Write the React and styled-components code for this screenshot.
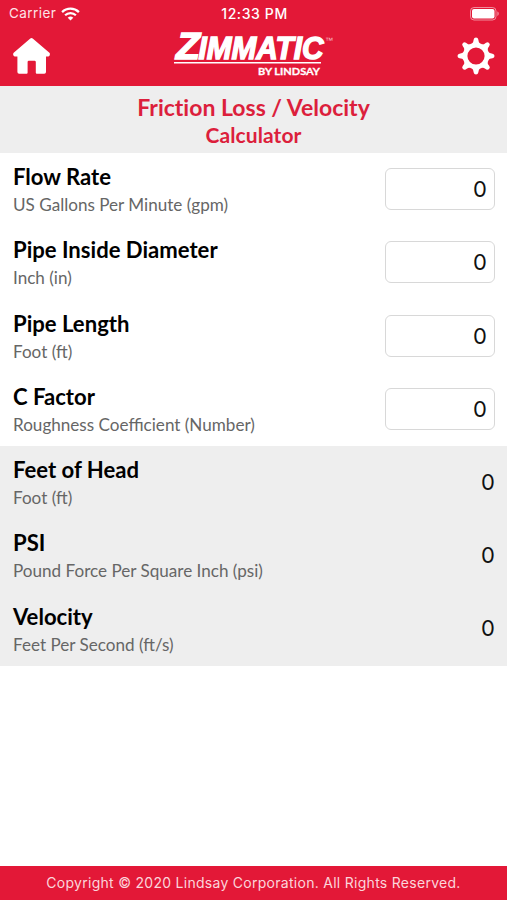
import React from "react";
import styled, { createGlobalStyle } from "styled-components";

const inputs = [
  { label: "Flow Rate", unit: "US Gallons Per Minute (gpm)" },
  { label: "Pipe Inside Diameter", unit: "Inch (in)" },
  { label: "Pipe Length", unit: "Foot (ft)" },
  { label: "C Factor", unit: "Roughness Coefficient (Number)" },
];

const results = [
  { label: "Feet of Head", unit: "Foot (ft)" },
  { label: "PSI", unit: "Pound Force Per Square Inch (psi)" },
  { label: "Velocity", unit: "Feet Per Second (ft/s)" },
];

const WifiIcon = () => (
  <svg width="19" height="14" viewBox="0 0 19 14" fill="none" stroke="#fff">
    <path d="M1.1 5.1a12 12 0 0 1 16.8 0" strokeWidth="2.3" />
    <path d="M4.1 8.3a7.7 7.7 0 0 1 10.8 0" strokeWidth="2.2" />
    <path d="M9.5 13.6 6.7 10.8a4 4 0 0 1 5.6 0z" fill="#fff" stroke="none" />
  </svg>
);

const BatteryIcon = () => (
  <svg width="30" height="14" viewBox="0 0 30 14">
    <rect x="0.5" y="0.5" width="25.5" height="12.5" rx="3.5" fill="none" stroke="#fff" strokeOpacity="0.5" />
    <rect x="2" y="2" width="22.5" height="9.5" rx="2" fill="#fff" />
    <path d="M27.3 4.6c2 .7 2 3.600 0 4.300z" fill="#fff" fillOpacity="0.5" />
  </svg>
);

const HomeIcon = () => (
  <svg width="37" height="36" viewBox="0 0 37 36" fill="#fff">
    <path d="M17.300.5q1.200-1 2.400 0L36.400 14.700q.8.800.4 2l-.3 1q-.4.800-1.300.8H33V34q0 1.700-1.700 1.700h-7.500q-1 0-1-1V24q0-1.200-1.200-1.200h-5.800q-1.200 0-1.200 1.200v10.700q0 1-1 1H6.100Q4.400 35.700 4.400 34V18.500H1.900q-.9 0-1.300-.8l-.4-1q-.3-1.200.5-2z" />
  </svg>
);

const teeth = [0, 45, 90, 135, 180, 225, 270, 315];

const GearIcon = () => (
  <svg width="38" height="38" viewBox="-19 -19 38 38">
    <circle r="10.9" fill="none" stroke="#fff" strokeWidth="4.6" />
    {teeth.map((angle) => (
      <path
        key={angle}
        d="M-4.2-12 Q-2.5-13.5-2.3-16.5 Q-2-18.5 0-18.5 Q2-18.5 2.3-16.5 Q2.500-13.500 4.200-12z"
        fill="#fff"
        transform={`rotate(${angle})`}
      />
    ))}
  </svg>
);

const Logo = () => (
  <svg width="162" height="54" viewBox="0 0 162 54" fill="#fff" fontFamily="Liberation Sans, Arial, sans-serif">
    <g fontWeight="bold" fontStyle="italic" stroke="#fff" strokeWidth="1.4">
      <text x="3" y="29.5" fontSize="37" textLength="24" lengthAdjust="spacingAndGlyphs">Z</text>
      <text x="25.5" y="29.5" fontSize="30.5" textLength="125" lengthAdjust="spacingAndGlyphs">IMMATIC</text>
    </g>
    <text x="152" y="13.5" fontSize="8" textLength="8" lengthAdjust="spacingAndGlyphs" fillOpacity="0.7">™</text>
    <rect x="1" y="33" width="147" height="1.5" />
    <text x="85" y="45.5" fontFamily="Lato, sans-serif" fontSize="10.3" fontWeight="bold" stroke="#fff" strokeWidth="0.3" textLength="62" lengthAdjust="spacingAndGlyphs">
      BY LINDSAY
    </text>
  </svg>
);

const App = () => {
  return (
    <>
      <GlobalStyle />
      <Screen>
        <Header>
          <StatusBar>
            <Carrier>
              <span>Carrier</span>
              <WifiIcon />
            </Carrier>
            <Clock>12:33 PM</Clock>
            <BatteryIcon />
          </StatusBar>
          <NavBar>
            <HomeIcon />
            <Logo />
            <GearIcon />
          </NavBar>
        </Header>

        <TitleBar>
          <Title>Friction Loss / Velocity</Title>
          <Subtitle>Calculator</Subtitle>
        </TitleBar>

        <Section>
          {inputs.map(({ label, unit }) => (
            <Row key={label}>
              <Caption>
                <Label>{label}</Label>
                <Unit>{unit}</Unit>
              </Caption>
              <Field type="text" aria-label={label} defaultValue="0" />
            </Row>
          ))}
        </Section>
        <Section $shaded>
          {results.map(({ label, unit }) => (
            <Row key={label}>
              <Caption>
                <Label>{label}</Label>
                <Unit>{unit}</Unit>
              </Caption>
              <Value>0</Value>
            </Row>
          ))}
        </Section>

        <Footer>Copyright © 2020 Lindsay Corporation. All Rights Reserved.</Footer>
      </Screen>
    </>
  );
};

const GlobalStyle = createGlobalStyle`
  * {
    box-sizing: border-box;
    margin: 0;
  }
  svg {
    display: block;
    flex-shrink: 0;
  }
`;

const Screen = styled.div`
  display: flex;
  flex-direction: column;
  width: 507px;
  height: 900px;
  background-color: #fff;
  font-family: Lato, sans-serif;
`;

const Header = styled.header`
  height: 86px;
  background-color: #e31837;
`;

const StatusBar = styled.div`
  display: grid;
  grid-template-columns: 1fr auto 1fr;
  align-items: center;
  height: 27px;
  padding: 0 7px 0 9px;
  color: #fff;
  font: 13.5px/27px Inter, sans-serif;
  > svg {
    justify-self: end;
  }
`;

const Carrier = styled.div`
  display: flex;
  align-items: center;
  gap: 5px;
  color: #fde3e7;
  letter-spacing: 0.45px;
`;

const Clock = styled.span`
  font-size: 14px;
  font-weight: 500;
  letter-spacing: 0.6px;
`;

const NavBar = styled.nav`
  display: flex;
  justify-content: space-between;
  align-items: center;
  height: 57px;
  padding: 0 12px 0 13px;
`;

const TitleBar = styled.div`
  height: 67px;
  padding-top: 7px;
  background-color: #eee;
  color: #dc1f3c;
  text-align: center;
`;

const Title = styled.h1`
  font-size: 23px;
  font-weight: 700;
  line-height: 28px;
  font-variant-ligatures: none;
`;

const Subtitle = styled.h2`
  font-size: 21px;
  font-weight: 700;
  line-height: 28px;
  letter-spacing: 0.1px;
`;

const Section = styled.section`
  background-color: ${({ $shaded }) => ($shaded ? "#eee" : "#fff")};
`;

const Row = styled.div`
  display: flex;
  justify-content: space-between;
  align-items: center;
  height: 73.25px;
  padding: 0 12px 0 13px;
`;

const Caption = styled.div`
  padding-top: 3px;
`;

const Label = styled.h3`
  color: #000;
  font-size: 22.1px;
  font-weight: 700;
  line-height: 28px;
`;

const Unit = styled.p`
  color: #666;
  font-size: 17.1px;
  line-height: 28px;
`;

const Field = styled.input`
  width: 110px;
  height: 42px;
  margin-bottom: 1px;
  padding: 0 7px;
  border: 1.5px solid #d8d8d8;
  border-radius: 6px;
  background-color: #fff;
  color: #111;
  font: 22px Inter, sans-serif;
  text-align: right;
  outline: none;
`;

const Value = styled.span`
  padding-bottom: 2px;
  color: #111;
  font: 22px Inter, sans-serif;
`;

const Footer = styled.footer`
  height: 34px;
  margin-top: auto;
  background-color: #e31837;
  color: #fbd5db;
  font: 14px/34px Inter, sans-serif;
  letter-spacing: 0.28px;
  text-align: center;
`;

export default App;
